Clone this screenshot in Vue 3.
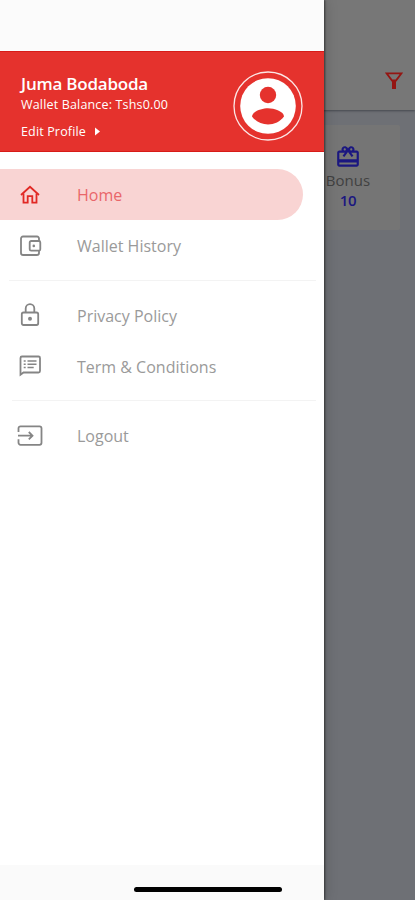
<script setup>
const groups = [
  [
    { label: 'Home', icon: 'home', active: true },
    { label: 'Wallet History', icon: 'wallet' },
  ],
  [
    { label: 'Privacy Policy', icon: 'lock' },
    { label: 'Term & Conditions', icon: 'terms' },
  ],
  [{ label: 'Logout', icon: 'logout' }],
]
</script>

<template>
  <div class="screen">
    <main class="page">
      <header class="topbar">
        <svg class="filter" viewBox="0 0 18 18">
          <path d="M1.6 1.3h14.8L11 8.5H7z" fill="none" stroke="currentColor" stroke-width="1.8" />
          <path d="M7 8h4v9H7z" fill="currentColor" />
        </svg>
      </header>
      <section class="bonus">
        <svg class="gift" viewBox="0 0 24 24">
          <path fill="currentColor" d="M20 6h-2.18c.11-.31.18-.65.18-1 0-1.66-1.34-3-3-3-1.05 0-1.96.54-2.5 1.35l-.5.67-.5-.68C10.96 2.54 10.05 2 9 2 7.34 2 6 3.34 6 5c0 .35.07.69.18 1H4c-1.11 0-1.99.89-1.99 2L2 19c0 1.11.89 2 2 2h16c1.11 0 2-.89 2-2V8c0-1.11-.89-2-2-2zm-5-2c.55 0 1 .45 1 1s-.45 1-1 1-1-.45-1-1 .45-1 1-1zM9 4c.55 0 1 .45 1 1s-.45 1-1 1-1-.45-1-1 .45-1 1-1zm11 15H4v-2h16v2zm0-5H4V8h5.08L7 10.83 8.62 12 12 7.4l3.38 4.6L17 10.83 14.92 8H20v6z" />
        </svg>
        <span class="bonus-label">Bonus</span>
        <span class="bonus-value">10</span>
      </section>
    </main>

    <aside class="drawer">
      <div class="status"></div>
      <header class="profile">
        <div class="info">
          <div class="name">Juma Bodaboda</div>
          <div class="balance">Wallet Balance: Tshs0.00</div>
          <div class="edit">
            <span>Edit Profile</span>
            <svg class="caret" viewBox="0 0 5 8"><path d="M0 0l5 4-5 4z" fill="currentColor" /></svg>
          </div>
        </div>
        <svg class="avatar" viewBox="0 0 70 70">
          <circle cx="35" cy="35" r="34" fill="none" stroke="#fff" stroke-opacity=".88" stroke-width="1.3" />
          <circle cx="35" cy="35" r="27.8" fill="#fff" />
          <circle cx="35" cy="24" r="8.2" fill="#e5322d" />
          <path d="M19 45.500c0-5 10-8.200 16-8.200s16 3.200 16 8.200c-3.500 5-10 8-16 8s-12.500-3-16-8z" fill="#e5322d" />
        </svg>
      </header>
      <nav class="menu">
        <div v-for="(group, i) in groups" :key="i" class="group">
          <div v-for="item in group" :key="item.label" class="item" :class="{ active: item.active }">
            <svg class="icon" viewBox="0 0 26 26" fill="none" stroke="currentColor" stroke-width="1.8">
              <template v-if="item.icon === 'home'">
                <path d="M4 13l9-8.200 9 8.200" />
                <path d="M6.500 11.500v9.200h4.200v-6.500h4.600v6.500h4.200v-9.200" />
              </template>
              <template v-else-if="item.icon === 'wallet'">
                <path d="M22 8.200V5.500a2 2 0 0 0-2-2H6a2 2 0 0 0-2 2v14.500a2 2 0 0 0 2 2h14a2 2 0 0 0 2-2v-2.300" />
                <rect x="12.700" y="8" width="10.600" height="9.700" rx="1.500" />
                <circle cx="16.800" cy="12.900" r="1.300" fill="currentColor" stroke="none" />
              </template>
              <template v-else-if="item.icon === 'lock'">
                <rect x="4.800" y="9.500" width="16.400" height="12.500" rx="1.700" />
                <path d="M8.700 9.500V5.500a4.300 4.300 0 0 1 8.600 0v4" />
                <circle cx="13" cy="15.700" r="2" fill="currentColor" stroke="none" />
              </template>
              <template v-else-if="item.icon === 'terms'">
                <path d="M3.500 20.800V4a1.500 1.500 0 0 1 1.500-1.500h16.500A1.500 1.500 0 0 1 23 4v13a1.500 1.500 0 0 1-1.500 1.500h-15z" />
                <path stroke-width="1.500" d="M6.700 7h2M6.700 10.200h2M6.700 13.400h2M10.500 7h9M10.500 10.200h9M10.500 13.400h6.200" />
              </template>
              <template v-else>
                <path d="M1.500 9V5.300a2 2 0 0 1 2-2h19a2 2 0 0 1 2 2v14.500a2 2 0 0 1-2 2h-19a2 2 0 0 1-2-2v-3.500" />
                <path d="M1 12.700h14.500M11.800 9l3.700 3.700-3.700 3.700" />
              </template>
            </svg>
            <span class="label">{{ item.label }}</span>
          </div>
        </div>
      </nav>
      <footer class="bottom"><div class="indicator"></div></footer>
    </aside>
  </div>
</template>

<style>
body {
  margin: 0;
}
</style>

<style scoped>
.screen {
  position: relative;
  width: 415px;
  height: 900px;
  overflow: hidden;
  font-family: 'Open Sans', 'Noto Sans', sans-serif;
}
.page {
  height: 100%;
  display: flex;
  flex-direction: column;
  align-items: flex-end;
  background: #6e7075;
}
.topbar {
  width: 100%;
  height: 110px;
  box-sizing: border-box;
  padding: 72px 12px 0 0;
  display: flex;
  justify-content: flex-end;
  align-items: flex-start;
  background: #777;
  box-shadow: 0 1px 2px rgba(35, 38, 45, 0.55);
}
.filter {
  width: 18px;
  height: 18px;
  color: #941512;
}
.bonus {
  width: 104px;
  height: 105px;
  box-sizing: border-box;
  margin: 15px 15px 0 0;
  padding-top: 19px;
  display: flex;
  flex-direction: column;
  align-items: center;
  background: #757575;
  border-radius: 2px;
}
.gift {
  width: 26px;
  height: 26px;
  color: #1b1780;
}
.bonus-label {
  font-size: 15px;
  line-height: 20px;
  color: #414141;
}
.bonus-value {
  font-size: 15px;
  line-height: 20px;
  font-weight: 600;
  letter-spacing: -0.3px;
  color: #1b1780;
}
.drawer {
  position: absolute;
  top: 0;
  left: 0;
  width: 324px;
  height: 100%;
  display: flex;
  flex-direction: column;
  background: #fff;
  box-shadow: 1px 0 2px rgba(0, 0, 0, 0.5), 2px 0 12px rgba(0, 0, 0, 0.15);
}
.status {
  height: 51px;
  background: #fbfbfb;
}
.profile {
  height: 101px;
  box-sizing: border-box;
  padding: 20px 21px 0 21px;
  display: flex;
  justify-content: space-between;
  align-items: flex-start;
  color: #fff;
  background: #e5322d;
  border-top: 1px solid #d71b18;
  border-bottom: 1px solid #d71b18;
}
.info {
  white-space: nowrap;
}
.name {
  font-size: 17px;
  line-height: 24px;
  font-weight: 600;
  letter-spacing: -0.22px;
}
.balance {
  font-size: 12.500px;
  line-height: 17px;
  font-weight: 500;
  letter-spacing: 0.17px;
}
.edit {
  display: flex;
  align-items: center;
  gap: 9px;
  margin-top: 9.500px;
  font-size: 12.500px;
  line-height: 18px;
  font-weight: 500;
  letter-spacing: 0.15px;
}
.caret {
  width: 5px;
  height: 9px;
}
.avatar {
  width: 70px;
  height: 70px;
  margin-top: -1px;
}
.menu {
  flex: 1;
  padding-top: 17px;
}
.group + .group {
  margin-top: 9px;
  padding-top: 10px;
  background: linear-gradient(#f3f3f3, #f3f3f3) 9px 0 / 307px 1px no-repeat;
}
.group:last-child {
  margin-top: 8px !important;
  background-position: 12px 0 !important;
  background-size: 304px 1px !important;
}
.item {
  width: 303px;
  height: 51px;
  box-sizing: border-box;
  padding-left: 17px;
  display: flex;
  align-items: center;
  gap: 34px;
  color: #858585;
}
.item.active {
  background: #f9d4d3;
  border-radius: 0 26px 26px 0;
  color: #e12824;
}
.icon {
  width: 26px;
  height: 26px;
  flex: none;
}
.label {
  font-size: 16px;
  line-height: 22px;
  color: #9a9a9a;
  padding-top: 1px;
  white-space: nowrap;
}
.active .label {
  color: #e9666a;
}
.bottom {
  height: 35px;
  display: flex;
  align-items: flex-start;
  justify-content: flex-end;
  box-sizing: border-box;
  padding: 21.500px 42px 0 0;
  background: #fafafa;
}
.indicator {
  width: 148px;
  height: 5px;
  border-radius: 3px;
  background: #000;
}
</style>
